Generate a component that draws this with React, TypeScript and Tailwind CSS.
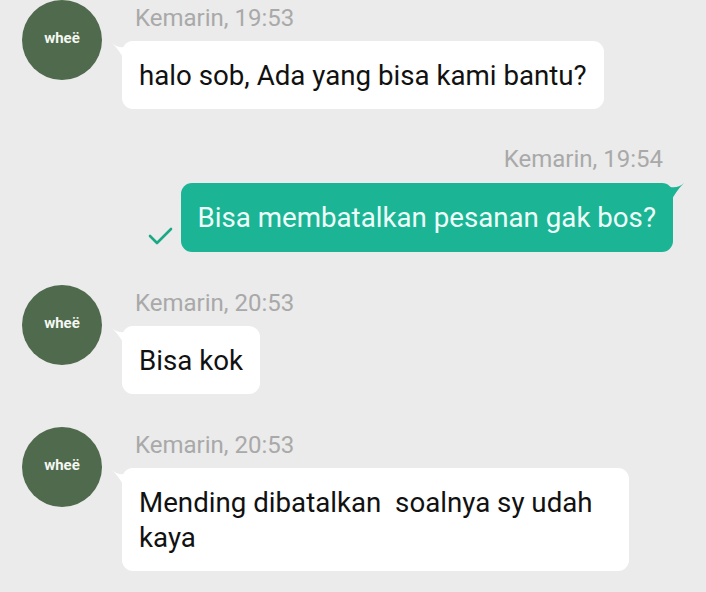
import React from "react";

function Avatar() {
  return (
    <div className="w-[80px] h-[80px] rounded-full bg-[#4f6a4c] flex items-center justify-center shrink-0">
      <span className="text-[#f4f7f2] text-[15px] font-bold font-['Roboto',sans-serif] -mt-[3px]">wheë</span>
    </div>
  );
}

function LeftTail() {
  return (
    <svg className="absolute -left-[10px] top-[2px]" width="14" height="20" viewBox="0 0 14 20">
      <path d="M0 0 C4 4 9 5 14 4 L14 20 C10 12 6 6 0 0 Z" fill="#ffffff" />
    </svg>
  );
}

function RightTail() {
  return (
    <svg className="absolute -right-[11px] top-0" width="14" height="20" viewBox="0 0 14 20">
      <path d="M14 0 C10 4 5 5 0 4 L0 20 C4 12 8 6 14 0 Z" fill="#1bb495" />
    </svg>
  );
}

function Incoming({ time, text, mt }: { time: string; text: React.ReactNode; mt: string }) {
  return (
    <div className={`flex gap-[20px] pl-[22px] ${mt}`}>
      <Avatar />
      <div className="flex flex-col items-start pt-[6px]">
        <div className="text-[24px] leading-[24px] text-[#a9a9a9] pl-[13px]">{time}</div>
        <div className="relative mt-[11px] max-w-[507px] bg-white rounded-[11px] px-[17px] pt-[17px] pb-[16px] text-[27.7px] leading-[35px] text-[#111]">
          <LeftTail />
          {text}
        </div>
      </div>
    </div>
  );
}

export default function App() {
  return (
    <div className="w-[706px] h-[592px] bg-[#ebebeb] overflow-hidden font-['Roboto',sans-serif]">
      <Incoming time="Kemarin, 19:53" text="halo sob, Ada yang bisa kami bantu?" mt="mt-0" />
      <div className="flex flex-col items-end pr-[33px] mt-[38px]">
        <div className="text-[24px] leading-[24px] text-[#a9a9a9] pr-[10px]">Kemarin, 19:54</div>
        <div className="flex items-end gap-[8px] mt-[12px]">
          <svg width="26" height="20" viewBox="0 0 26 20" className="mb-[6px]">
            <path d="M3 10 L10 17 L24 3" fill="none" stroke="#1aa985" strokeWidth="2.6" strokeLinecap="round" strokeLinejoin="round" />
          </svg>
          <div className="relative bg-[#1bb495] rounded-[11px] px-[17px] pt-[17px] pb-[17px] text-[27.7px] leading-[35px] text-[#eefff9]">
            <RightTail />
            Bisa membatalkan pesanan gak bos?
          </div>
        </div>
      </div>
      <Incoming time="Kemarin, 20:53" text="Bisa kok" mt="mt-[33px]" />
      <Incoming time="Kemarin, 20:53" text={"Mending dibatalkan\u00a0 soalnya sy udah kaya"} mt="mt-[33px]" />
    </div>
  );
}
